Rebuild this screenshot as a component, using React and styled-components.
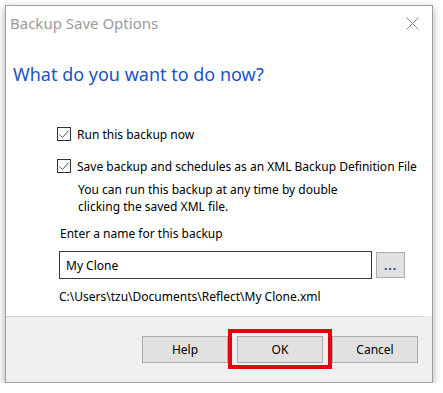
import React from 'react'
import styled, { createGlobalStyle } from 'styled-components'

const Global = createGlobalStyle`
body {
    margin: 0;
    background: #ffffff;
    font-family: "Noto Sans", "Open Sans", sans-serif;
}
`

const Window = styled.div`
position: relative;
margin: 5px 0 0 5px;
width: 428px;
height: 378px;
box-sizing: border-box;
border: 1px solid #a0a0a0;
background: #ffffff;
box-shadow: 0 3px 8px rgba(0, 0, 0, 0.35);
display: flex;
flex-direction: column;
`

const TitleBar = styled.div`
height: 42px;
display: flex;
align-items: center;
justify-content: space-between;
padding: 0 13px 8px 4px;
box-sizing: border-box;
color: #9b9b9b;
font-size: 15px;
`

const CloseIcon = styled.svg`
width: 13px;
height: 13px;
`

const Body = styled.div`
flex: 1;
padding: 14px 10px 0 7px;
overflow: hidden;
`

const Heading = styled.h1`
margin: 0;
font-weight: 400;
font-size: 18px;
line-height: 24px;
color: #2153c4;
`

const Section = styled.div`
margin: 40px 0 0 44px;
font-size: 12px;
color: #000;
`

const CheckRow = styled.label`
display: flex;
align-items: center;
gap: 6px;
height: 16px;
white-space: nowrap;
margin-bottom: ${p => p.gap || 0}px;
`

const Box = styled.span`
width: 14px;
height: 14px;
box-sizing: border-box;
border: 1px solid #333;
display: flex;
align-items: center;
justify-content: center;
flex-shrink: 0;
`

const Note = styled.p`
margin: 7px 0 0 21px;
line-height: 17px;
`

const Label = styled.div`
margin: 10px 0 0 3px;
line-height: 17px;
`

const InputRow = styled.div`
display: flex;
align-items: center;
gap: 4px;
margin: 9px 0 0 2px;
`

const NameInput = styled.div`
width: 313px;
height: 28px;
box-sizing: border-box;
border: 1px solid #3a3a3a;
padding-left: 6px;
display: flex;
align-items: center;
`

const Browse = styled.div`
width: 29px;
height: 26px;
box-sizing: border-box;
border: 1px solid #adadad;
background: #e1e1e1;
color: #1c3f8f;
font-weight: 700;
display: flex;
align-items: center;
justify-content: center;
letter-spacing: 1px;
`

const Path = styled.div`
margin: 9px 0 0 2px;
line-height: 17px;
`

const Footer = styled.div`
height: 66px;
box-sizing: border-box;
background: #f0f0f0;
border-top: 1px solid #d0d0d0;
margin-right: 9px;
position: relative;
display: flex;
justify-content: flex-end;
align-items: flex-start;
gap: 9px;
padding: 19px 5px 0 0;
`

const FooterFill = styled.div`
position: absolute;
top: -1px;
right: -9px;
width: 9px;
bottom: 0;
background: #f0f0f0;
`

const Button = styled.div`
position: relative;
width: 86px;
height: 27px;
box-sizing: border-box;
border: 1px solid #adadad;
background: #e1e1e1;
display: flex;
align-items: center;
justify-content: center;
font-size: 12px;
color: #000;
`

const Highlight = styled.div`
position: absolute;
top: -8px;
left: -10px;
right: -10px;
bottom: -7px;
border: 4px solid #e8000b;
`

const Check = () => (
    <svg width="12" height="12" viewBox="0 0 12 12">
        <path d="M1.5 6.5 L4.5 9.5 L10.5 2.5" fill="none" stroke="#555" strokeWidth="1" />
    </svg>
)

const App = () => (
    <>
        <Global />
        <Window>
            <TitleBar>
                <span>Backup Save Options</span>
                <CloseIcon viewBox="0 0 13 13">
                    <path d="M0.5 0.5 L12.5 12.5 M12.5 0.5 L0.5 12.5" stroke="#8a8a8a" strokeWidth="1" />
                </CloseIcon>
            </TitleBar>
            <Body>
                <Heading>What do you want to do now?</Heading>
                <Section>
                    <CheckRow gap={16}>
                        <Box><Check /></Box>
                        Run this backup now
                    </CheckRow>
                    <CheckRow>
                        <Box><Check /></Box>
                        Save backup and schedules as an XML Backup Definition File
                    </CheckRow>
                    <Note>
                        You can run this backup at any time by double<br />
                        clicking the saved XML file.
                    </Note>
                    <Label>Enter a name for this backup</Label>
                    <InputRow>
                        <NameInput>My Clone</NameInput>
                        <Browse>...</Browse>
                    </InputRow>
                    <Path>C:\Users\tzu\Documents\Reflect\My Clone.xml</Path>
                </Section>
            </Body>
            <Footer>
                <FooterFill />
                <Button>Help</Button>
                <Button>
                    OK
                    <Highlight />
                </Button>
                <Button>Cancel</Button>
            </Footer>
        </Window>
    </>
)

export default App
